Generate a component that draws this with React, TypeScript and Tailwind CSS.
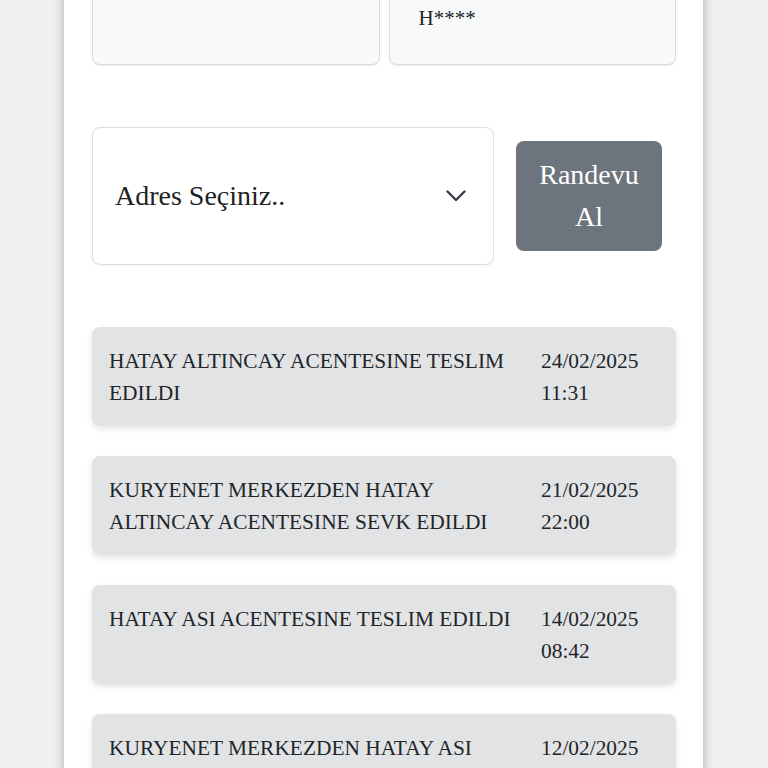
const events = [
  { text: "HATAY ALTINCAY ACENTESINE TESLIM EDILDI", date: "24/02/2025", time: "11:31" },
  { text: "KURYENET MERKEZDEN HATAY ALTINCAY ACENTESINE SEVK EDILDI", date: "21/02/2025", time: "22:00" },
  { text: "HATAY ASI ACENTESINE TESLIM EDILDI", date: "14/02/2025", time: "08:42" },
  { text: "KURYENET MERKEZDEN HATAY ASI ACENTESINE SEVK EDILDI", date: "12/02/2025", time: "19:15" },
];

export default function App() {
  return (
    <div
      className="min-h-screen h-[768px] overflow-hidden bg-[#efefef] text-[#212529]"
      style={{ fontFamily: '"Liberation Serif", "Times New Roman", serif' }}
    >
      <div className="ml-[64px] w-[639px] min-h-[768px] bg-white pl-[28px] pr-[27px] pb-10 shadow-[0_0_10px_rgba(0,0,0,0.28)]">
        {/* receiver info cards (scrolled past the top) */}
        <div className="-mt-[40px] grid grid-cols-2 gap-[9px]">
          <div className="h-[105px] rounded-lg border border-[#dadcdf] bg-[#f8f9fa] shadow-[0_1px_2px_rgba(0,0,0,0.08)]" />
          <div className="h-[105px] rounded-lg border border-[#dadcdf] bg-[#f8f9fa] pl-[29px] pt-[41px] text-[21px] leading-[32px] shadow-[0_1px_2px_rgba(0,0,0,0.08)]">
            H****
          </div>
        </div>

        {/* address + appointment */}
        <div className="mt-[62px] flex items-center">
          <div className="flex h-[138px] w-[402px] items-center justify-between rounded-lg border border-[#dedede] bg-white pl-[22px] pr-[27px] shadow-[0_1px_3px_rgba(0,0,0,0.05)]">
            <span className="text-[28px] leading-[42px] text-[#222]">Adres Seçiniz..</span>
            <svg width="20" height="12" viewBox="0 0 20 12" fill="none" className="text-[#343a40]">
              <polyline points="1.5,1.5 10,10 18.5,1.5" stroke="currentColor" strokeWidth="2.3" strokeLinecap="round" strokeLinejoin="round" />
            </svg>
          </div>
          <button className="ml-[22px] w-[146px] rounded-lg bg-[#6c757d] py-[13px] text-center text-[28px] leading-[42px] text-white">
            Randevu
            <br />
            Al
          </button>
        </div>

        {/* shipment history */}
        <div className="mt-[62px] flex flex-col gap-[30px]">
          {events.map((e) => (
            <div
              key={e.date}
              className="grid grid-cols-[1fr_119px] gap-4 rounded-lg bg-[#e2e3e5] pl-[17px] pr-[16px] pt-[18px] pb-[17px] text-[21.4px] leading-[32px] shadow-[0_3px_6px_rgba(0,0,0,0.1)]"
            >
              <div>{e.text}</div>
              <div>
                {e.date}
                <br />
                {e.time}
              </div>
            </div>
          ))}
        </div>
      </div>
    </div>
  );
}
